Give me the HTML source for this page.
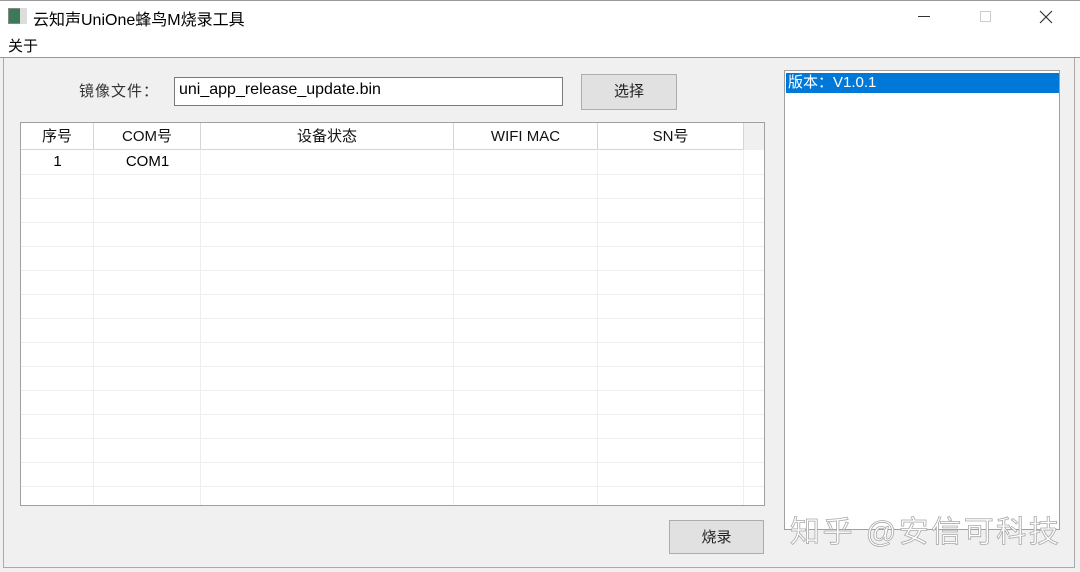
<!DOCTYPE html>
<html><head><meta charset="utf-8"><style>
*{margin:0;padding:0;box-sizing:border-box}
body{width:1080px;height:572px;position:relative;background:#fff;font-family:"Liberation Sans","Noto Sans CJK SC",sans-serif;overflow:hidden;color:#000}
.a{position:absolute}
.btn{position:absolute;background:#e1e1e1;border:1px solid #adadad;font-size:15px;text-align:center;color:#222}
.hd{position:absolute;top:0;height:27px;line-height:27px;text-align:center;font-size:15px;border-right:1px solid #d5d5d5;color:#111}
</style></head><body>
<div class="a" style="left:0;top:0;width:1080px;height:1px;background:#999"></div>
<div class="a" style="left:8px;top:8px;width:19px;height:16px;background:#3a7a5a;border:1px solid #888"></div>
<div class="a" style="left:20px;top:8px;width:7px;height:16px;background:#ddd"></div>
<div class="a" style="left:33px;top:6px;font-size:16px">云知声UniOne蜂鸟M烧录工具</div>
<div class="a" style="left:918px;top:16px;width:12px;height:1px;background:#333"></div>
<div class="a" style="left:980px;top:11px;width:11px;height:11px;border:1px solid #ccc"></div>
<svg class="a" style="left:1039px;top:10px" width="14" height="14"><path d="M1 1L13 13M13 1L1 13" stroke="#333" stroke-width="1.2"/></svg>
<div class="a" style="left:8px;top:35px;font-size:15px">关于</div>
<div class="a" style="left:0;top:57px;width:1080px;height:515px;background:#f0f0f0;border-top:1px solid #999"></div>
<div class="a" style="left:3px;top:58px;width:1px;height:510px;background:#aaa"></div>
<div class="a" style="left:1074px;top:58px;width:1px;height:510px;background:#aaa"></div>
<div class="a" style="left:3px;top:567px;width:1072px;height:1px;background:#aaa"></div>
<div class="a" style="left:79px;top:80px;font-size:15px;color:#333;letter-spacing:1px">镜像文件：</div>
<div class="a" style="left:174px;top:77px;width:389px;height:29px;background:#fff;border:1px solid #7a7a7a;font-size:16px;padding:3px 4px">uni_app_release_update.bin</div>
<div class="btn" style="left:581px;top:74px;width:96px;height:36px;line-height:34px">选择</div>
<div class="a" style="left:20px;top:122px;width:745px;height:384px;background:#fff;border:1px solid #a0a0a0">
 <div class="a" style="left:0;top:0;width:743px;height:27px;background:#fff;border-bottom:1px solid #d5d5d5"></div>
 <div class="hd" style="left:0;width:73px">序号</div>
 <div class="hd" style="left:73px;width:107px">COM号</div>
 <div class="hd" style="left:180px;width:253px">设备状态</div>
 <div class="hd" style="left:433px;width:144px">WIFI MAC</div>
 <div class="hd" style="left:577px;width:146px">SN号</div>
 <div class="a" style="left:723px;top:0;width:20px;height:27px;background:#f0f0f0"></div>
 <div class="a" style="left:0;top:28px;width:743px;height:354px;background:repeating-linear-gradient(to bottom,transparent 0,transparent 23px,#eeeeee 23px,#eeeeee 24px)"></div>
 <div class="a" style="left:72px;top:28px;width:1px;height:354px;background:#eee"></div>
 <div class="a" style="left:179px;top:28px;width:1px;height:354px;background:#eee"></div>
 <div class="a" style="left:432px;top:28px;width:1px;height:354px;background:#eee"></div>
 <div class="a" style="left:576px;top:28px;width:1px;height:354px;background:#eee"></div>
 <div class="a" style="left:722px;top:28px;width:1px;height:354px;background:#eee"></div>
 <div class="a" style="left:0;top:30px;width:73px;text-align:center;font-size:15px">1</div>
 <div class="a" style="left:73px;top:30px;width:107px;text-align:center;font-size:15px">COM1</div>
</div>
<div class="btn" style="left:669px;top:520px;width:95px;height:34px;line-height:34px">烧录</div>
<div class="a" style="left:784px;top:70px;width:276px;height:460px;background:#fff;border:1px solid #a0a0a0">
 <div class="a" style="left:1px;top:2px;width:273px;height:20px;background:#0078d7;color:#fff;font-size:15px;line-height:20px;padding-left:2px">版本：V1.0.1</div>
</div>
<div class="a" style="left:790px;top:507px;font-size:30px;color:#fff;-webkit-text-stroke:0.8px #aaa;letter-spacing:2.5px">知乎 @安信可科技</div>
</body></html>
